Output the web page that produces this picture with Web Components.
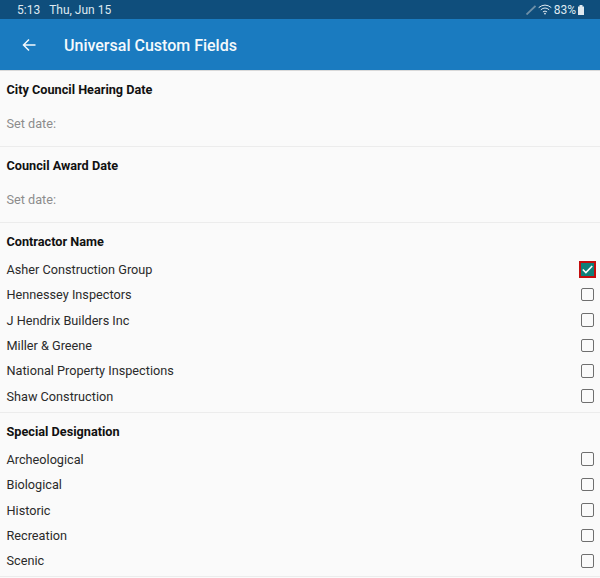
<!DOCTYPE html>
<html>
<head>
<meta charset="utf-8">
<title>Universal Custom Fields</title>
<style>
    html, body { margin: 0; padding: 0; background: #fafafa; }
    body { width: 600px; height: 578px; overflow: hidden; font-family: Roboto, "Liberation Sans", sans-serif; }
</style>
</head>
<body>
<app-status-bar></app-status-bar>
<app-toolbar>Universal Custom Fields</app-toolbar>
<date-field label="City Council Hearing Date"></date-field>
<date-field label="Council Award Date"></date-field>
<check-group label="Contractor Name">
    <check-row checked>Asher Construction Group</check-row>
    <check-row>Hennessey Inspectors</check-row>
    <check-row>J Hendrix Builders Inc</check-row>
    <check-row>Miller &amp; Greene</check-row>
    <check-row>National Property Inspections</check-row>
    <check-row>Shaw Construction</check-row>
</check-group>
<check-group label="Special Designation">
    <check-row>Archeological</check-row>
    <check-row>Biological</check-row>
    <check-row>Historic</check-row>
    <check-row>Recreation</check-row>
    <check-row>Scenic</check-row>
</check-group>
<script>
class AppStatusBar extends HTMLElement {
    constructor() {
        super();
        this.attachShadow({ mode: 'open' }).innerHTML = `
            <style>
                :host { display: flex; align-items: center; height: 19px; background: #0f4e7c; color: #dfe9f0; font-size: 12px; padding: 0 16px 0 17px; }
                .date { margin-left: 9px; }
                .right { margin-left: auto; display: flex; align-items: center; gap: 2px; }
                svg { display: block; }
            </style>
            <span>5:13</span><span class="date">Thu, Jun 15</span>
            <span class="right">
                <svg width="10" height="10" viewBox="0 0 10 10"><path d="M.5 9.5 L9.5 1" stroke="#6f90a8" stroke-width="1.8" fill="none"/></svg>
                <svg width="14" height="11" viewBox="0 0 14 11" fill="none" stroke="#dfe9f0" stroke-width="1">
                    <path d="M.7 3.6 Q7 -1.4 13.3 3.6"/><path d="M2.8 5.8 Q7 2.2 11.2 5.8"/><path d="M4.9 7.9 Q7 6.2 9.1 7.9"/><circle cx="7" cy="9.6" r=".9" fill="#dfe9f0" stroke="none"/>
                </svg>
                <span>83%</span>
                <svg width="6" height="10" viewBox="0 0 6 10"><rect x="0" y="1.5" width="6" height="8.5" fill="#dfe9f0"/><rect x="1.5" y="0" width="3" height="2" fill="#dfe9f0"/></svg>
            </span>`;
    }
}

class AppToolbar extends HTMLElement {
    constructor() {
        super();
        this.attachShadow({ mode: 'open' }).innerHTML = `
            <style>
                :host { display: flex; align-items: center; height: 50px; padding-top: 1px; background: #1a7bc0; color: #f4f9fc; font-size: 16px; font-weight: 500; border-bottom: 1px solid #d9d9d9; }
                svg { margin: 0 28px 0 22px; display: block; }
            </style>
            <svg width="14" height="14" viewBox="0 0 14 14" fill="none" stroke="#f4f9fc" stroke-width="1.5"><path d="M13.5 7 H1.5 M7 1.5 L1.5 7 L7 12.5"/></svg>
            <slot></slot>`;
    }
}

class DateField extends HTMLElement {
    constructor() {
        super();
        this.attachShadow({ mode: 'open' }).innerHTML = `
            <style>
                :host { display: block; height: 75px; padding: 0 6.5px; border-bottom: 1px solid #ececec; font-size: 12.7px; }
                .label { font-weight: 700; color: #111; line-height: 15px; padding-top: 11px; }
                .value { color: #8c8c8c; line-height: 15px; margin-top: 19.4px; }
            </style>
            <div class="label"></div>
            <div class="value">Set date:</div>`;
    }
    connectedCallback() {
        this.shadowRoot.querySelector('.label').textContent = this.getAttribute('label');
    }
}

class CheckGroup extends HTMLElement {
    constructor() {
        super();
        this.attachShadow({ mode: 'open' }).innerHTML = `
            <style>
                :host { display: block; padding-bottom: 3px; border-bottom: 1px solid #ececec; }
                .label { font-size: 12.7px; font-weight: 700; color: #111; line-height: 15px; padding: 11px 6.5px 7.6px; }
            </style>
            <div class="label"></div>
            <slot></slot>`;
    }
    connectedCallback() {
        this.shadowRoot.querySelector('.label').textContent = this.getAttribute('label');
    }
}

class CheckRow extends HTMLElement {
    constructor() {
        super();
        this.attachShadow({ mode: 'open' }).innerHTML = `
            <style>
                :host { display: flex; align-items: center; justify-content: space-between; height: 25.4px; padding: 0 6px 0 6.5px; font-size: 12.7px; color: #2a2a2a; }
                .box { width: 11.5px; height: 11.5px; flex: none; border: 1.5px solid #6f6f6f; border-radius: 2px; background: #fafafa; display: flex; align-items: center; justify-content: center; }
                :host([checked]) .box { background: #0f7f78; border: 2px solid #c40d0d; border-radius: 0; width: 13px; height: 13px; margin-right: -2px; }
                svg { display: none; }
                :host([checked]) svg { display: block; }
            </style>
            <slot></slot>
            <span class="box"><svg width="11" height="9" viewBox="0 0 11 9" fill="none" stroke="#fff" stroke-width="1.6"><path d="M.8 4.5 L3.9 7.6 L10.2 1"/></svg></span>`;
    }
}

customElements.define('app-status-bar', AppStatusBar);
customElements.define('app-toolbar', AppToolbar);
customElements.define('date-field', DateField);
customElements.define('check-group', CheckGroup);
customElements.define('check-row', CheckRow);
</script>
</body>
</html>
